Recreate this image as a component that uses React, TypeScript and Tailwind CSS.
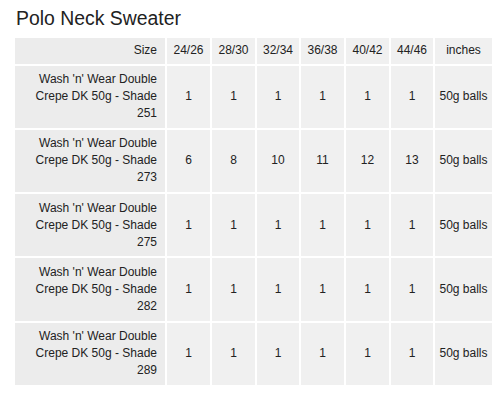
import React from 'react';

const sizes = ['24/26', '28/30', '32/34', '36/38', '40/42', '44/46'];

const rows = [
  { shade: '251', qty: ['1', '1', '1', '1', '1', '1'] },
  { shade: '273', qty: ['6', '8', '10', '11', '12', '13'] },
  { shade: '275', qty: ['1', '1', '1', '1', '1', '1'] },
  { shade: '282', qty: ['1', '1', '1', '1', '1', '1'] },
  { shade: '289', qty: ['1', '1', '1', '1', '1', '1'] }
];

export default function App() {
  return (
    <div className="min-h-screen w-[501px] bg-white pl-[15px] pt-[7px] text-[#222] font-['Liberation_Sans',Arial,sans-serif]">
      <h1 className="mb-[8px] pl-px text-[19.4px] leading-[23px] font-normal">Polo Neck Sweater</h1>
      <div className="grid grid-cols-[150px_43px_43px_42px_43px_43px_42px_57px] grid-rows-[25.5px_repeat(5,62.3px)] gap-[2px] text-[12px] leading-[17px]">
        <div className="flex items-center justify-end bg-[#ececec] pr-[8px]">Size</div>
        {sizes.map((s) => (
          <div key={s} className="flex items-center justify-center bg-[#f0f0f0]">
            {s}
          </div>
        ))}
        <div className="flex items-center justify-center bg-[#f0f0f0]">inches</div>

        {rows.map((r) => (
          <React.Fragment key={r.shade}>
            <div className="flex items-center justify-end bg-[#ececec] pl-[8px] pr-[8px] text-right">
              <span>Wash 'n' Wear Double Crepe DK 50g - Shade {r.shade}</span>
            </div>
            {r.qty.map((q, i) => (
              <div key={i} className="flex items-center justify-center bg-[#f0f0f0]">
                {q}
              </div>
            ))}
            <div className="flex items-center justify-center bg-[#f0f0f0] whitespace-nowrap">50g balls</div>
          </React.Fragment>
        ))}
      </div>
    </div>
  );
}
